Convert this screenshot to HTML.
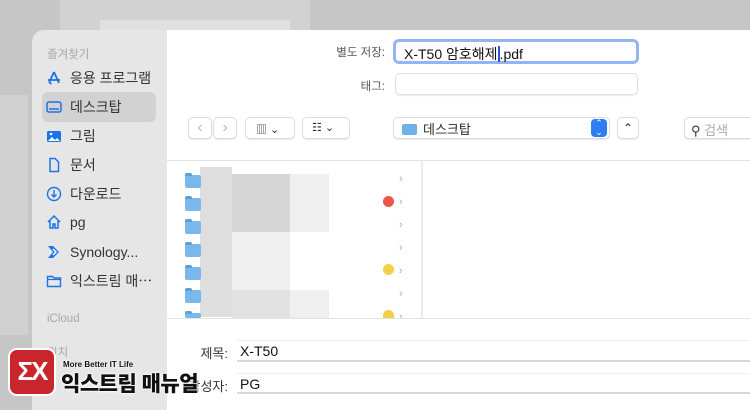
<!DOCTYPE html>
<html><head><meta charset="utf-8"><style>
*{margin:0;padding:0;box-sizing:border-box}
body{width:750px;height:404px;overflow:hidden;position:relative;background:#c6c6c6;font-family:"Liberation Sans","Noto Sans CJK KR",sans-serif;color:#2a2a2a}
.a{position:absolute}
.side{left:32px;top:30px;width:135px;height:380px;background:#e6e6e6;border-radius:12px 0 0 0}
.main{left:167px;top:30px;width:583px;height:380px;background:#fff}
.si{position:absolute;left:46px;font-size:14px;color:#333;display:flex;align-items:center;gap:8px}
.si svg{width:16px;height:16px}
.hd{position:absolute;left:47px;font-size:11.5px;color:#a8a8a8}
.btn{position:absolute;background:#fff;border:1px solid #ddd;border-radius:5px;box-shadow:0 1px 1px rgba(0,0,0,.1)}
.lbl{position:absolute;font-size:11.5px;color:#555;text-align:right}
.fd{position:absolute;left:185px;width:16px;height:13px;background:#7ab8ec;border-radius:2px}
.fd:before{content:"";position:absolute;left:0;top:-2px;width:7px;height:3px;background:#5d9fd8;border-radius:2px 2px 0 0}
.ch{position:absolute;left:399px;font-size:11px;color:#aaa}
.dot{position:absolute;left:383px;width:11px;height:11px;border-radius:50%}
</style></head><body>
<div class="a" style="left:60px;top:0;width:250px;height:30px;background:#d2d2d2"></div>
<div class="a" style="left:100px;top:20px;width:190px;height:10px;background:#e0e0e0"></div>
<div class="a" style="left:0;top:95px;width:28px;height:240px;background:#d0d0d0"></div>
<div class="a side"></div>
<div class="a main"></div>
<div class="hd" style="top:46px">즐겨찾기</div>
<div class="a" style="left:42px;top:92px;width:114px;height:30px;background:#d2d2d2;border-radius:6px"></div>
<div class="si" style="top:68px"><svg viewBox="0 0 16 16"><path d="M8 2L3 13M8 2l5 11M2 10h12M4 14l1.5-1" stroke="#1a73e8" stroke-width="1.8" fill="none"/></svg>응용 프로그램</div>
<div class="si" style="top:97px"><svg viewBox="0 0 16 16"><rect x="1" y="3" width="14" height="10" rx="2" stroke="#1a73e8" stroke-width="1.5" fill="none"/><path d="M3 10h10" stroke="#1a73e8" stroke-width="1.5"/></svg>데스크탑</div>
<div class="si" style="top:126px"><svg viewBox="0 0 16 16"><rect x="1" y="3" width="14" height="11" rx="1.5" fill="#1a73e8"/><path d="M2 13l4-4 3 3 2-2 3 3z" fill="#fff"/><circle cx="5" cy="6" r="1.3" fill="#fff"/></svg>그림</div>
<div class="si" style="top:155px"><svg viewBox="0 0 16 16"><path d="M4 1.5h5l3.5 3.5v9.5h-8.5z" stroke="#1a73e8" stroke-width="1.5" fill="none"/></svg>문서</div>
<div class="si" style="top:184px"><svg viewBox="0 0 16 16"><circle cx="8" cy="8" r="6.5" stroke="#1a73e8" stroke-width="1.4" fill="none"/><path d="M8 4v7M5.5 8.5L8 11l2.5-2.5" stroke="#1a73e8" stroke-width="1.4" fill="none"/></svg>다운로드</div>
<div class="si" style="top:214px"><svg viewBox="0 0 16 16"><path d="M2 8l6-6 6 6M4 7v7h3v-4h2v4h3V7" stroke="#1a73e8" stroke-width="1.5" fill="none"/></svg>pg</div>
<div class="si" style="top:244px"><svg viewBox="0 0 16 16"><path d="M2 2h5l6 6-6 6H2l5-6z" fill="#1a73e8"/><path d="M7 5l3 3-3 3" stroke="#fff" stroke-width="1.5" fill="none"/></svg>Synology...</div>
<div class="si" style="top:271px"><svg viewBox="0 0 16 16"><path d="M1.5 3.5h5l1.5 1.5h6.5v8.5h-13z" stroke="#1a73e8" stroke-width="1.4" fill="none"/><path d="M1.5 6.5h13" stroke="#1a73e8" stroke-width="1.2"/></svg>익스트림 매⋯</div>
<div class="hd" style="top:313px">iCloud</div>
<div class="hd" style="top:344px">위치</div>

<div class="lbl" style="left:300px;top:44px;width:85px">별도 저장:</div>
<div class="a" style="left:393px;top:39px;width:246px;height:25px;border:3px solid #95b4f3;border-radius:6px;background:#fff;font-size:14px;padding:2px 0 0 8px;color:#111">X-T50 암호해제<span style="border-left:2px solid #2358d6">.</span>pdf</div>
<div class="lbl" style="left:300px;top:78px;width:85px">태그:</div>
<div class="a" style="left:395px;top:73px;width:243px;height:22px;border:1px solid #e0e0e0;border-radius:5px;box-shadow:0 1px 1px rgba(0,0,0,.08)"></div>
<div class="btn" style="left:188px;top:117px;width:24px;height:22px;color:#bbb;font-size:16px;text-align:center;line-height:19px">&lsaquo;</div>
<div class="btn" style="left:213px;top:117px;width:24px;height:22px;color:#bbb;font-size:16px;text-align:center;line-height:19px">&rsaquo;</div>
<div class="btn" style="left:245px;top:117px;width:50px;height:22px;font-size:11px;padding:3px 0 0 10px">▥ ⌄</div>
<div class="btn" style="left:302px;top:117px;width:48px;height:22px;font-size:11px;padding:3px 0 0 9px">☷ ⌄</div>
<div class="btn" style="left:393px;top:117px;width:217px;height:22px;font-size:13px;padding:1px 0 0 8px"><span style="display:inline-block;width:15px;height:11px;background:#6fb0e6;border-radius:2px;vertical-align:-1px;margin-right:6px"></span>데스크탑</div>
<div class="a" style="left:591px;top:119px;width:16px;height:18px;background:#2f7df2;border-radius:4px;color:#fff;font-size:9px;text-align:center;line-height:9px;padding-top:0">⌃<br>⌄</div>
<div class="btn" style="left:617px;top:117px;width:22px;height:22px;font-size:12px;text-align:center;padding-top:3px">⌃</div>
<div class="btn" style="left:684px;top:117px;width:80px;height:22px;font-size:13px;color:#aaa;padding:2px 0 0 6px"><span style="color:#333">&#9906;</span> 검색</div>
<div class="a" style="left:167px;top:160px;width:583px;height:1px;background:#e3e3e3"></div>
<div class="a" style="left:421px;top:161px;width:2px;height:157px;background:#ececec"></div>
<div class="a" style="left:200px;top:167px;width:32px;height:150px;background:#dedede"></div>
<div class="a" style="left:232px;top:174px;width:58px;height:58px;background:#d6d6d6"></div>
<div class="a" style="left:290px;top:174px;width:39px;height:58px;background:#efefef"></div>
<div class="a" style="left:232px;top:232px;width:58px;height:58px;background:#efefef"></div>
<div class="a" style="left:232px;top:290px;width:58px;height:28px;background:#e2e2e2"></div>
<div class="a" style="left:290px;top:290px;width:39px;height:28px;background:#efefef"></div>
<div class="fd" style="top:175px"></div><div class="fd" style="top:198px"></div><div class="fd" style="top:221px"></div><div class="fd" style="top:244px"></div><div class="fd" style="top:267px"></div><div class="fd" style="top:290px"></div><div class="fd" style="top:313px;height:5px"></div>
<div class="ch" style="top:173px">›</div><div class="ch" style="top:196px">›</div><div class="ch" style="top:219px">›</div><div class="ch" style="top:242px">›</div><div class="ch" style="top:265px">›</div><div class="ch" style="top:288px">›</div><div class="ch" style="top:311px">›</div>
<div class="dot" style="top:196px;background:#e9574b"></div>
<div class="dot" style="top:264px;background:#f2cf4d"></div>
<div class="dot" style="top:310px;height:8px;border-radius:6px 6px 0 0;background:#f2cf4d"></div>
<div class="a" style="left:167px;top:318px;width:583px;height:1px;background:#e3e3e3"></div>
<div class="lbl" style="left:150px;top:343px;width:78px;font-size:13px;color:#333">제목:</div>
<div class="a" style="left:237px;top:340px;width:520px;height:22px;border-top:1px solid #f0f0f0;border-bottom:2px solid #d8d8d8;font-size:14px;padding:2px 0 0 3px;color:#111">X-T50</div>
<div class="lbl" style="left:150px;top:376px;width:78px;font-size:13px;color:#333">작성자:</div>
<div class="a" style="left:237px;top:373px;width:520px;height:21px;border-top:1px solid #f0f0f0;border-bottom:2px solid #d8d8d8;font-size:14px;padding:2px 0 0 3px;color:#111">PG</div>
<div class="a" style="left:8px;top:348px;width:48px;height:48px;background:#c8262c;border-radius:9px;border:2px solid #fff;color:#fff;font-weight:bold;font-size:26px;text-align:center;line-height:43px;letter-spacing:-2px">ΣX</div>
<div class="a" style="left:63px;top:360px;font-size:8px;font-weight:bold;color:#111;text-shadow:0 0 2px #fff,0 0 2px #fff">More Better IT Life</div>
<div class="a" style="left:61px;top:368px;font-size:21px;font-weight:900;color:#111;letter-spacing:-0.5px;text-shadow:0 0 2px #fff,0 0 2px #fff,0 0 3px #fff">익스트림 매뉴얼</div>
</body></html>
